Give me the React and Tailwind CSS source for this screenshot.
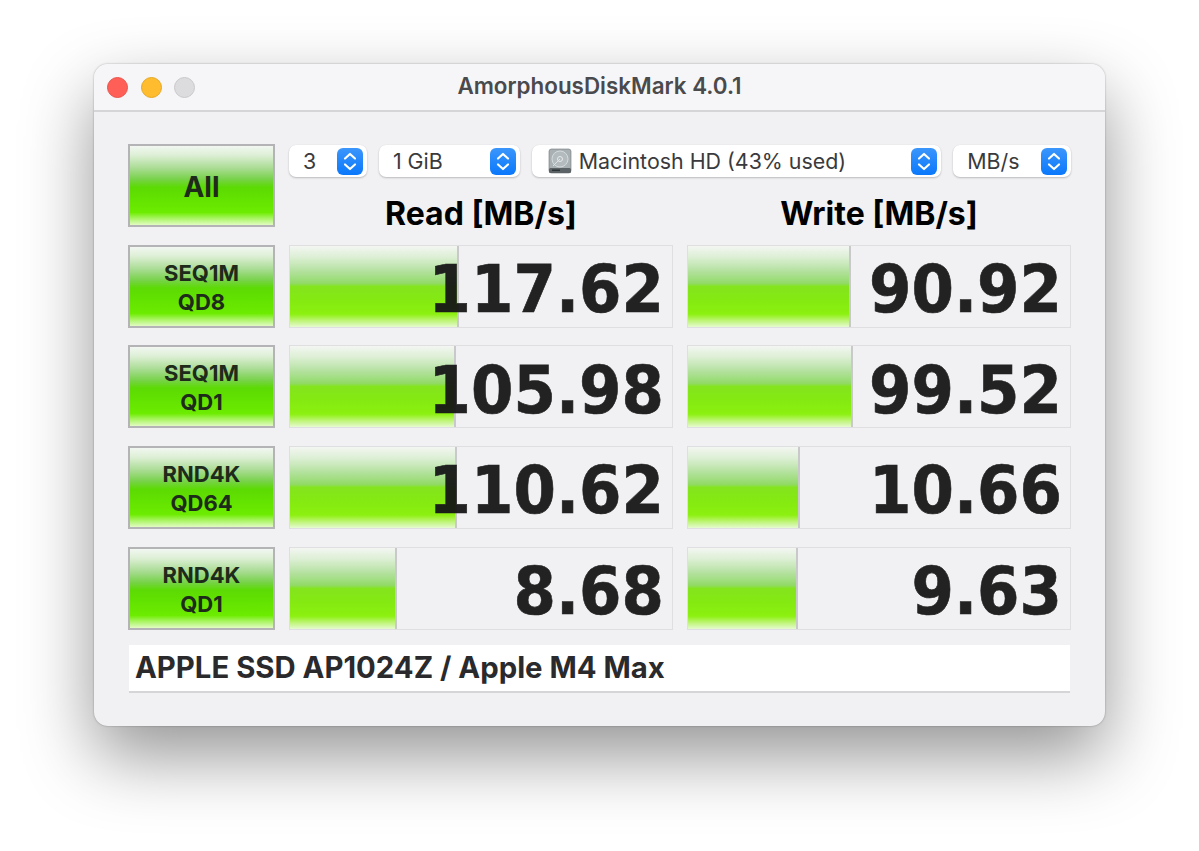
const INTER = "font-['Inter','Liberation_Sans',sans-serif]";
const btnGrad = "bg-[linear-gradient(180deg,#f2f7f1_0%,#dcefd4_12%,#aadc94_28%,#78d24a_42%,#5cda04_52%,#62e200_66%,#6cec00_84%,#a4f45a_91%,#e2fbc4_100%)]";
const barGrad = "bg-[linear-gradient(180deg,#f3f6f2_0%,#dcefd4_14%,#b6e2a2_30%,#92da68_46%,#84e41e_50%,#84ea10_68%,#8cf010_84%,#b8f468_91%,#e6fad2_100%)]";

const rows = [
  { a: "SEQ1M", b: "QD8", read: "117.62", readW: 169, write: "90.92", writeW: 163 },
  { a: "SEQ1M", b: "QD1", read: "105.98", readW: 166, write: "99.52", writeW: 165 },
  { a: "RND4K", b: "QD64", read: "110.62", readW: 167, write: "10.66", writeW: 112 },
  { a: "RND4K", b: "QD1", read: "8.68", readW: 107, write: "9.63", writeW: 110 },
];

function Stepper() {
  return (
    <span className="w-[26px] h-[27px] rounded-[6px] bg-[linear-gradient(180deg,#3b96fb,#0a78fb)] flex items-center justify-center shrink-0">
      <svg width="16" height="21" viewBox="0 0 16 21" fill="none" stroke="white" strokeWidth="2.2" strokeLinecap="round" strokeLinejoin="round">
        <path d="M3 7.5 8 3l5 4.5" />
        <path d="M3 13.5 8 18l5-4.5" />
      </svg>
    </span>
  );
}

function Select({ className, children }) {
  return (
    <div className={`h-[32px] bg-white rounded-[7px] shadow-[0_1px_2px_rgba(0,0,0,0.22),0_0_1px_rgba(0,0,0,0.08)] flex items-center justify-between pr-[4px] text-[21.4px] text-[#3a3a3c] ${className}`}>
      {children}
      <Stepper />
    </div>
  );
}

function DiskIcon() {
  return (
    <svg width="26" height="26" viewBox="0 0 26 26" className="shrink-0">
      <rect x="2" y="1" width="22" height="24" rx="2.5" fill="#a9b0b3" stroke="#6f7679" strokeWidth="0.6" />
      <rect x="2" y="20" width="22" height="5" rx="1.5" fill="#5c6366" />
      <circle cx="13" cy="11" r="8" fill="#b4bbbe" stroke="#d5dadc" strokeWidth="1" />
      <circle cx="13" cy="11" r="2.5" fill="none" stroke="#e6eaeb" strokeWidth="1" />
      <path d="M6 18 13 11" stroke="#dfe3e5" strokeWidth="1" />
      <rect x="5" y="21.5" width="8" height="1.5" fill="#2f3436" />
    </svg>
  );
}

function TestButton({ children }) {
  return (
    <div className={`border-2 border-[#b4b4b6] pt-[3px] ${btnGrad} flex flex-col items-center justify-center font-bold text-[#1e2a1a] ${INTER}`}>
      {children}
    </div>
  );
}

function Meter({ value, width }) {
  return (
    <div className="relative border-[1.5px] border-[#dfdfe1] flex items-center justify-end pr-[8px] pt-[5px]">
      <div className={`absolute left-0 top-0 bottom-0 ${barGrad} border-r-2 border-[#c9c9cb]`} style={{ width }} />
      <span className="relative font-['DejaVu_Sans',sans-serif] font-bold text-[61px] leading-none scale-y-[1.07] text-[#161616]/95 [-webkit-text-stroke:0.6px_#222222]">{value}</span>
    </div>
  );
}

export default function App() {
  return (
    <div className="w-[1199px] h-[851px] bg-white pt-[64px] pl-[94px] overflow-hidden">
      <div className={`w-[1011px] h-[662px] rounded-[14px] bg-[#f1f1f3] shadow-[0_30px_70px_rgba(0,0,0,0.42),0_0_2px_rgba(0,0,0,0.35)] overflow-hidden ${INTER}`}>
        <div className="relative h-[48px] bg-[#f6f6f8] border-b-2 border-[#d5d5d7] flex items-center justify-center">
          <div className="absolute left-[13px] top-[13px] flex gap-[12.5px]">
            <span className="w-[21px] h-[21px] rounded-full bg-[#ff5f57] border border-[#e8524a]" />
            <span className="w-[21px] h-[21px] rounded-full bg-[#febc2e] border border-[#e5a823]" />
            <span className="w-[21px] h-[21px] rounded-full bg-[#dcdcde] border border-[#c8c8ca]" />
          </div>
          <span className="text-[22.4px] font-semibold text-[#4a4a4c] pb-[2px]">AmorphousDiskMark 4.0.1</span>
        </div>

        <div className="pt-[32px] pl-[34px] pr-[33px]">
          <div className="grid grid-cols-[147px_384px_384px] gap-x-[14px] auto-rows-[83px] gap-y-[17.67px]">
            <TestButton><span className="text-[28px] leading-none">All</span></TestButton>
            <div className="col-span-2 flex flex-col">
              <div className="flex gap-[12px] mt-px">
                <Select className="w-[78px] pl-[14px]"><span>3</span></Select>
                <Select className="w-[141px] pl-[14px]"><span>1 GiB</span></Select>
                <Select className="w-[410px] pl-[15px]">
                  <span className="flex items-center gap-[6px]"><DiskIcon />Macintosh HD (43% used)</span>
                </Select>
                <Select className="w-[118px] pl-[14px]"><span>MB/s</span></Select>
              </div>
              <div className="grid grid-cols-2 gap-x-[14px] mt-[18px] text-[32px] font-bold leading-[38px] text-black text-center">
                <span>Read [MB/s]</span>
                <span>Write [MB/s]</span>
              </div>
            </div>

            {rows.map((r, i) => (
              <div key={i} className="contents">
                <TestButton>
                  <span className="text-[22px] leading-[29px]">{r.a}</span>
                  <span className="text-[22px] leading-[29px]">{r.b}</span>
                </TestButton>
                <Meter value={r.read} width={r.readW} />
                <Meter value={r.write} width={r.writeW} />
              </div>
            ))}
          </div>

          <div className="mt-[15px] ml-px w-[941px] h-[48px] bg-white border-b-2 border-[#d5d5d7] flex items-center px-[6px] text-[29.3px] font-bold text-[#2a2a2c]">
            APPLE SSD AP1024Z / Apple M4 Max
          </div>
        </div>
      </div>
    </div>
  );
}
